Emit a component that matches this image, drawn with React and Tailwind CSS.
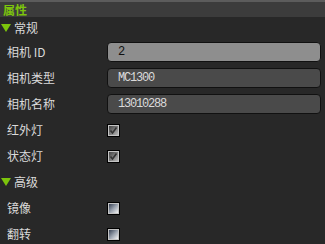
import React from "react";

const font = { fontFamily: '"Noto Sans CJK SC", "Liberation Sans", sans-serif' };

function Tri() {
  return (
    <svg width="10" height="8" viewBox="0 0 10 8" className="shrink-0">
      <polygon points="0,0 10,0 5,8" fill="#7cc40c" />
    </svg>
  );
}

function Check({ checked }) {
  return (
    <div className="w-[13px] h-[13px] border border-black bg-black">
      <div
        className={
          "w-full h-full border border-[#c4c4c4] flex items-center justify-center " +
          (checked
            ? "bg-gradient-to-br from-[#444] to-[#b8b8b8]"
            : "bg-gradient-to-br from-[#3a4456] via-[#9aa2ae] to-[#f4f4f4]")
        }
      >
        {checked && (
          <svg width="9" height="9" viewBox="0 0 9 9">
            <path d="M1.5 4.5 L3.5 7 L7.5 1.5" stroke="#333" strokeWidth="1.6" fill="none" />
          </svg>
        )}
      </div>
    </div>
  );
}

function Section({ label, first }) {
  return (
    <div className={(first ? "h-[22px]" : "h-[26px]") + " flex items-center pl-[1px] gap-[3px]"}>
      <Tri />
      <span className="text-[12px] text-[#dadada] leading-none">{label}</span>
    </div>
  );
}

function Row({ label, children }) {
  return (
    <div className="h-[26px] flex items-center">
      <div className="w-[107px] pl-[7px] text-[12px] text-[#dadada] leading-none whitespace-pre">{label}</div>
      <div className="flex-1 pr-[4px] flex items-center">{children}</div>
    </div>
  );
}

function Input({ value, light }) {
  return (
    <div
      className={
        "w-full h-[20px] rounded-[4px] border border-[#111] flex items-center pl-[10px] " +
        (light ? "bg-[#8e8e8e] text-[#111]" : "bg-[#4a4a4a] text-[#dadada]")
      }
      style={{ fontFamily: '"Liberation Mono", monospace', fontSize: "12px", letterSpacing: "-1.2px" }}
    >
      {value}
    </div>
  );
}

export default function App() {
  return (
    <div className="w-[325px] h-[244px] bg-[#282828] overflow-hidden" style={font}>
      <div className="h-[2px] bg-[#5c5c5c]" />
      <div className="h-[15px] bg-[#3c3c3c] flex items-center pl-[3px]">
        <span className="text-[12px] font-bold text-[#7cc40c] leading-none">属性</span>
      </div>
      <Section label="常规" first />
      <Row label="相机 ID">
        <Input value="2" light />
      </Row>
      <Row label="相机类型">
        <Input value="MC1300" />
      </Row>
      <Row label="相机名称">
        <Input value="13010288" />
      </Row>
      <Row label="红外灯">
        <Check checked />
      </Row>
      <Row label="状态灯">
        <Check checked />
      </Row>
      <Section label="高级" />
      <Row label="镜像">
        <Check />
      </Row>
      <Row label="翻转">
        <Check />
      </Row>
    </div>
  );
}
